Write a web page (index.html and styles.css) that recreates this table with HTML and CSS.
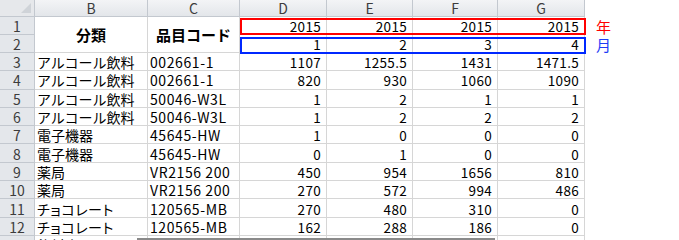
FILE: index.html
```html
<!DOCTYPE html>
<html lang="ja">
<head>
<meta charset="utf-8">
<link rel="stylesheet" href="styles.css">
</head>
<body>
<div class="sheet">
  <div class="grid">
    <div class="corner"><span class="tri"></span></div>
    <div class="ch">B</div>
    <div class="ch">C</div>
    <div class="ch">D</div>
    <div class="ch">E</div>
    <div class="ch">F</div>
    <div class="ch">G</div>
    <div class="blank"></div>

    <div class="rh">1</div>
    <div class="c head span2">分類</div>
    <div class="c head span2">品目コード</div>
    <div class="c n">2015</div>
    <div class="c n">2015</div>
    <div class="c n">2015</div>
    <div class="c n">2015</div>
    <div class="blank lab red">年</div>

    <div class="rh">2</div>
    <div class="c n">1</div>
    <div class="c n">2</div>
    <div class="c n">3</div>
    <div class="c n">4</div>
    <div class="blank lab blue">月</div>

    <div class="rh">3</div><div class="c">アルコール飲料</div><div class="c code">002661-1</div><div class="c n">1107</div><div class="c n">1255.5</div><div class="c n">1431</div><div class="c n">1471.5</div><div class="blank"></div>
    <div class="rh">4</div><div class="c">アルコール飲料</div><div class="c code">002661-1</div><div class="c n">820</div><div class="c n">930</div><div class="c n">1060</div><div class="c n">1090</div><div class="blank"></div>
    <div class="rh">5</div><div class="c">アルコール飲料</div><div class="c code">50046-W3L</div><div class="c n">1</div><div class="c n">2</div><div class="c n">1</div><div class="c n">1</div><div class="blank"></div>
    <div class="rh">6</div><div class="c">アルコール飲料</div><div class="c code">50046-W3L</div><div class="c n">1</div><div class="c n">2</div><div class="c n">2</div><div class="c n">2</div><div class="blank"></div>
    <div class="rh">7</div><div class="c">電子機器</div><div class="c code">45645-HW</div><div class="c n">1</div><div class="c n">0</div><div class="c n">0</div><div class="c n">0</div><div class="blank"></div>
    <div class="rh">8</div><div class="c">電子機器</div><div class="c code">45645-HW</div><div class="c n">0</div><div class="c n">1</div><div class="c n">0</div><div class="c n">0</div><div class="blank"></div>
    <div class="rh">9</div><div class="c">薬局</div><div class="c code">VR2156 200</div><div class="c n">450</div><div class="c n">954</div><div class="c n">1656</div><div class="c n">810</div><div class="blank"></div>
    <div class="rh">10</div><div class="c">薬局</div><div class="c code">VR2156 200</div><div class="c n">270</div><div class="c n">572</div><div class="c n">994</div><div class="c n">486</div><div class="blank"></div>
    <div class="rh">11</div><div class="c prop">チョコレート</div><div class="c code">120565-MB</div><div class="c n">270</div><div class="c n">480</div><div class="c n">310</div><div class="c n">0</div><div class="blank"></div>
    <div class="rh">12</div><div class="c prop">チョコレート</div><div class="c code">120565-MB</div><div class="c n">162</div><div class="c n">288</div><div class="c n">186</div><div class="c n">0</div><div class="blank"></div>
    <div class="rh">13</div><div class="c">飲料水</div><div class="c"></div><div class="c n"></div><div class="c n"></div><div class="c n"></div><div class="c n"></div><div class="blank"></div>
  </div>
  <div class="box box-red"></div>
  <div class="box box-blue"></div>
  <div class="shadow"></div>
</div>
</body>
</html>
```
FILE: styles.css
```css
html, body {
  margin: 0;
  padding: 0;
  background: #fff;
  overflow: hidden;
}
body {
  width: 679px;
  height: 240px;
}
.sheet {
  position: relative;
  width: 679px;
  height: 240px;
  overflow: hidden;
  font-family: "Noto Sans CJK JP", "DejaVu Sans", sans-serif;
  font-size: 14px;
  color: #000;
}
.grid {
  display: grid;
  grid-template-columns: 35px 113px 92px 87px 86px 85px 87px 1fr;
  grid-template-rows: 17px 18px 18px repeat(11, 18.3px);
}
.corner, .ch, .rh {
  box-sizing: border-box;
  border-right: 1px solid #c3c8cf;
  border-bottom: 1px solid #c3c8cf;
  color: #3c3c3c;
  font-size: 14px;
  display: flex;
  align-items: center;
  justify-content: center;
  line-height: 14px;
}
.corner {
  background: #e6e8eb;
  position: relative;
}
.tri {
  position: absolute;
  right: 3px;
  bottom: 3px;
  width: 0;
  height: 0;
  border-left: 10px solid transparent;
  border-bottom: 10px solid #cfd3d8;
}
.ch {
  background: linear-gradient(#f3f4f6, #e3e6ea);
}
.rh {
  background: #e4e7eb;
  padding-top: 1px;
}
.c {
  box-sizing: border-box;
  border-right: 1px solid #d6d6d6;
  border-bottom: 1px solid #d6d6d6;
  padding: 1px 2px 0;
  display: flex;
  align-items: center;
  white-space: nowrap;
  line-height: 14px;
}
.c.n {
  justify-content: flex-end;
  padding-right: 5px;
  font-size: 13.5px;
  letter-spacing: 0.3px;
}
.code {
  letter-spacing: 0.6px;
}
.prop {
  font-feature-settings: "palt";
  letter-spacing: 0.6px;
}
.head {
  font-weight: bold;
  font-size: 15px;
  justify-content: center;
}
.span2 {
  grid-row: span 2;
}
.blank {
  background: #fff;
}
.lab {
  display: flex;
  align-items: center;
  padding-left: 11px;
  font-size: 15px;
  line-height: 15px;
}
.red { color: #ff0000; }
.blue { color: #1d3cf5; }
.box {
  position: absolute;
  box-sizing: border-box;
  left: 240px;
  width: 346px;
  height: 17px;
}
.box-red {
  top: 18px;
  border: 2px solid #ff0000;
}
.box-blue {
  top: 37px;
  border: 2px solid #0028ff;
}
.shadow {
  position: absolute;
  left: 137px;
  top: 238px;
  width: 358px;
  height: 2px;
  background: #8a8a8a;
}
```
